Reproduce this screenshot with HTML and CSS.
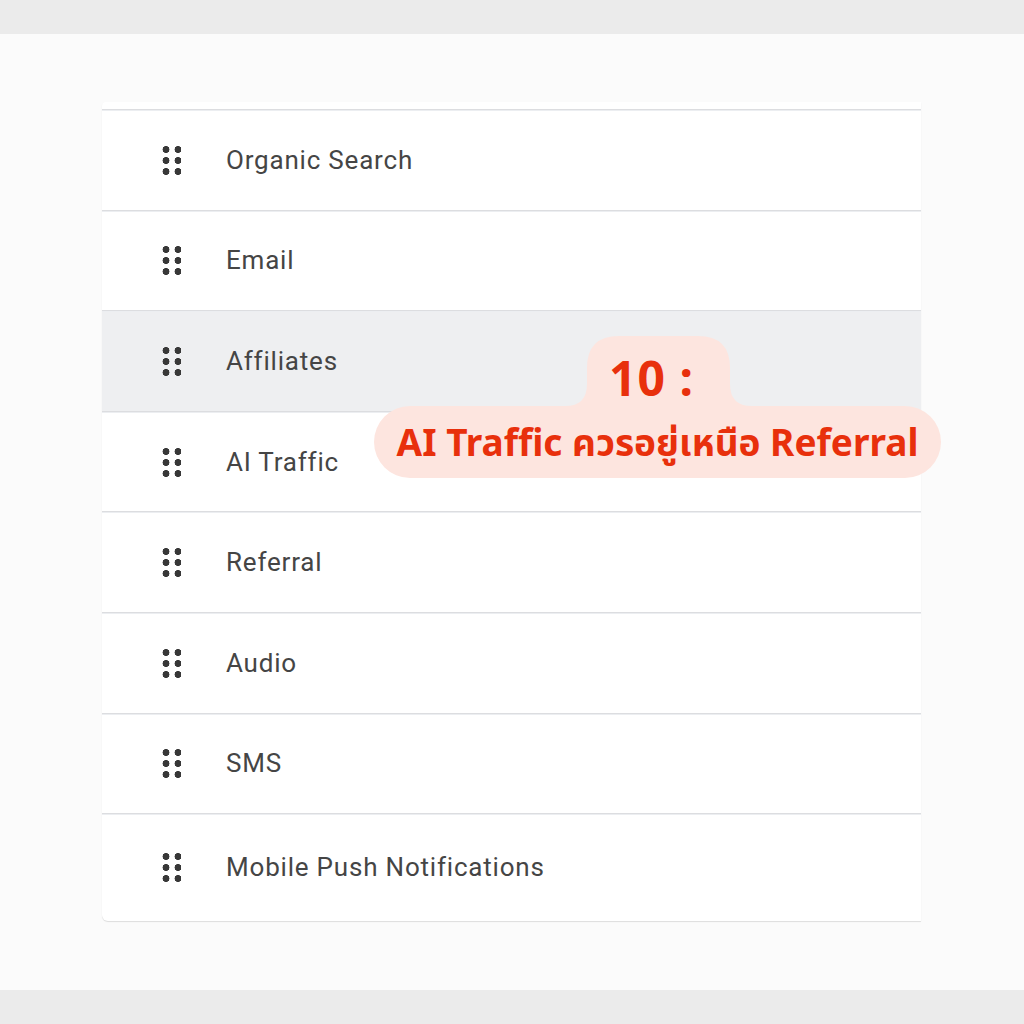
FILE: index.html
```html
<!DOCTYPE html>
<html lang="en">
<head>
    <meta charset="UTF-8">
    <title>Channel Groups - Reorder</title>
    <link rel="stylesheet" href="styles.css">
</head>
<body>
    <div class="band"></div>

    <!-- Channel list -->
    <main class="stage">
        <div class="card">
            <ul class="channel-list">
                <li class="channel"><span class="grip"></span><span class="name">Organic Search</span></li>
                <li class="channel"><span class="grip"></span><span class="name">Email</span></li>
                <li class="channel active"><span class="grip"></span><span class="name">Affiliates</span></li>
                <li class="channel"><span class="grip"></span><span class="name">AI Traffic</span></li>
                <li class="channel"><span class="grip"></span><span class="name">Referral</span></li>
                <li class="channel"><span class="grip"></span><span class="name">Audio</span></li>
                <li class="channel"><span class="grip"></span><span class="name">SMS</span></li>
                <li class="channel last"><span class="grip"></span><span class="name">Mobile Push Notifications</span></li>
            </ul>
        </div>

        <!-- Annotation bubble -->
        <div class="note">
            <svg class="note-bg" width="567" height="142" viewBox="0 0 567 142">
                <path d="M36 70 H191 Q213 70 213 48 V32 Q213 0 245 0 H324 Q356 0 356 32 V48 Q356 70 378 70 H531 A36 36 0 0 1 531 142 H36 A36 36 0 0 1 36 70 Z" fill="#fde5df"/>
            </svg>
            <div class="note-step">10 :</div>
            <div class="note-text">AI Traffic ควรอยู่เหนือ Referral</div>
        </div>
    </main>

    <div class="band"></div>
</body>
</html>
```

FILE: styles.css
```css
body {
    margin: 0;
    padding: 0;
    background-color: #fbfbfb;
    font-family: Roboto, "Noto Sans", sans-serif;
}

.band {
    height: 34px;
    background-color: #ebebeb;
}

.stage {
    position: relative;
    height: 956px;
    box-sizing: border-box;
    padding: 68px 0 0 102px;
}

.card {
    width: 819px;
    background-color: white;
    padding-top: 7px;
    border-radius: 4px 0 0 6px;
    box-shadow: 0 1px 1px rgba(0, 0, 0, 0.12);
}

.channel-list {
    list-style: none;
    margin: 0;
    padding: 0;
}

.channel {
    display: flex;
    align-items: center;
    height: 99.6px;
    border-top: 1px solid #dcdde0;
    box-shadow: inset 0 1px 0 #eceef1;
}

.channel.active {
    background-color: #eeeff1;
}

.channel.last {
    height: 106px;
    padding-bottom: 1px;
}

.grip {
    width: 20px;
    height: 30px;
    margin: 0 45px 0 59px;
    background-image: radial-gradient(circle, #383838 3.2px, transparent 3.7px);
    background-size: 12px 11px;
    background-position: -1px -1px;
}

.name {
    font-size: 26px;
    letter-spacing: 0.8px;
    color: #454545;
}

.note {
    position: absolute;
    left: 374px;
    top: 302px;
    width: 567px;
    height: 142px;
    display: flex;
    flex-direction: column;
    align-items: center;
    font-family: "Noto Sans", "Noto Sans Thai", sans-serif;
    font-weight: bold;
    color: #e8300c;
}

.note-bg {
    position: absolute;
    left: 0;
    top: 0;
}

.note-step {
    position: relative;
    margin-top: 14px;
    margin-left: -12px;
    font-size: 48px;
    letter-spacing: 1px;
    line-height: 56px;
}

.note-text {
    position: relative;
    margin-top: 13px;
    font-size: 37px;
    line-height: 46px;
}
```
